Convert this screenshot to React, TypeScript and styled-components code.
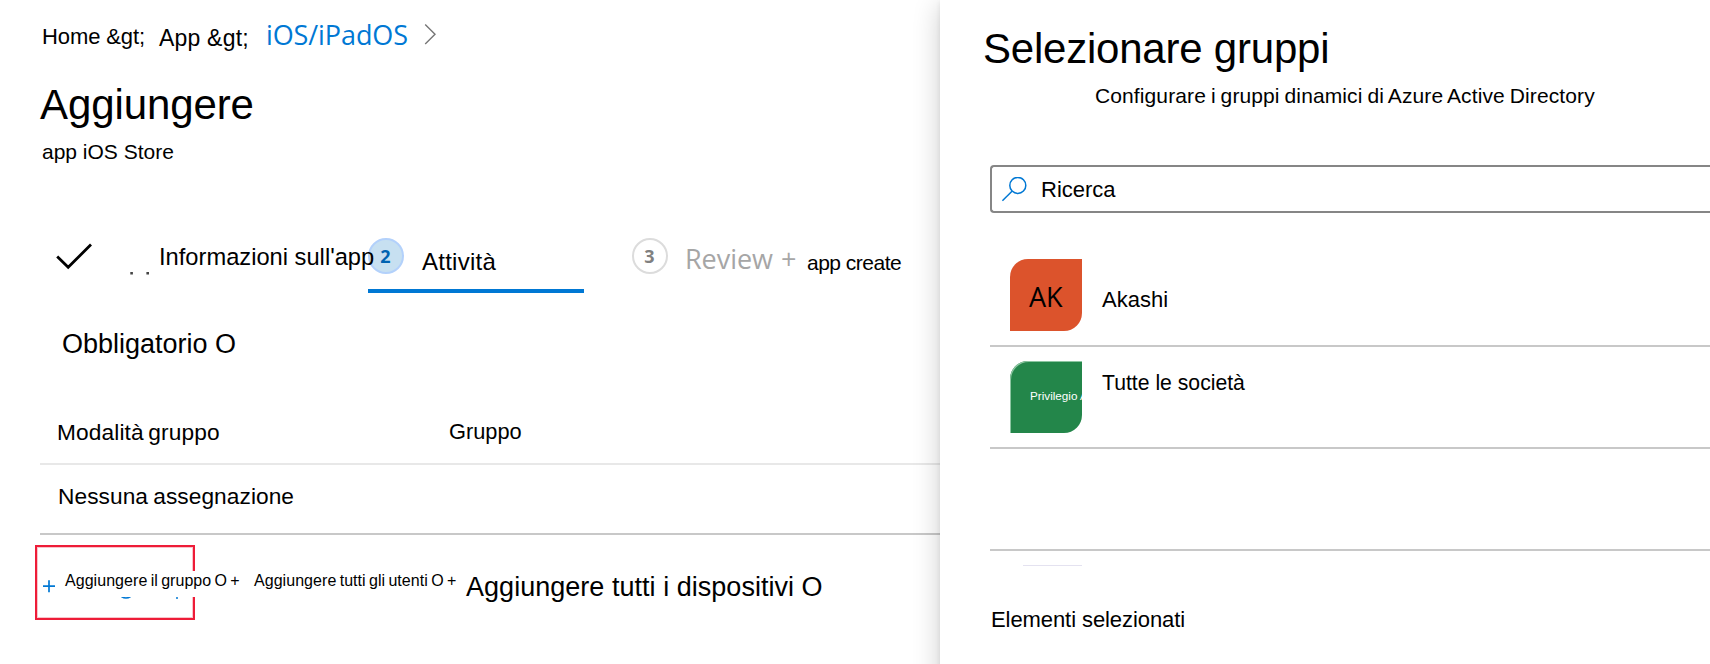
import React from "react";
import styled, { createGlobalStyle } from "styled-components";

const GlobalStyle = createGlobalStyle`
  * { box-sizing: border-box; }
  body { margin: 0; background: #fff; color: #000; overflow: hidden; }
`;

const sans = `"Liberation Sans", Arial, sans-serif`;
const humanist = `"Open Sans", "Segoe UI", sans-serif`;

const Page = styled.div`
  display: flex;
  align-items: flex-start;
  width: 1710px;
  height: 664px;
  overflow: hidden;
  font-family: ${sans};
`;

const Main = styled.main`
  width: 940px;
  height: 664px;
  flex: none;
  overflow: hidden;
`;

const SidePanel = styled.aside`
  position: relative;
  flex: none;
  width: 770px;
  height: 720px;
  background: #fff;
  box-shadow: 0 5px 26px rgba(0, 0, 0, 0.2), 0 2px 5px rgba(0, 0, 0, 0.08);
`;

type TextProps = { $size: number; $drop?: number; $spacing?: number; $words?: number };

const Label = styled.span<TextProps>`
  display: block;
  white-space: nowrap;
  line-height: 1;
  font-size: ${(p) => p.$size}px;
  padding-top: ${(p) => p.$drop ?? 0}px;
  letter-spacing: ${(p) => p.$spacing ?? 0}px;
  word-spacing: ${(p) => p.$words ?? 0}px;
`;

const SoftLabel = styled(Label)<{ $color: string }>`
  font-family: ${humanist};
  color: ${(p) => p.$color};
`;

const Title = styled.h1<{ $spacing: number }>`
  margin: 0;
  font-weight: 400;
  font-size: 42px;
  line-height: 1;
  white-space: nowrap;
  letter-spacing: ${(p) => p.$spacing}px;
`;

const Breadcrumb = styled.nav`
  display: grid;
  grid-template-columns: 117px 107px 158px auto;
  align-items: start;
  height: 84px;
  padding: 21px 0 0 42px;
`;

const Heading = styled.header`
  height: 154px;
  padding-left: 40px;
`;

const Subtitle = styled.p`
  margin: 15px 0 0 2px;
  font-size: 21px;
  line-height: 1;
`;

const Steps = styled.div`
  display: flex;
  height: 92px;
`;

const Step = styled.div<{ $width: number; $inset: number; $active?: boolean }>`
  display: flex;
  align-items: flex-start;
  width: ${(p) => p.$width}px;
  height: 55px;
  flex: none;
  padding-left: ${(p) => p.$inset}px;
  border-bottom: 4px solid ${(p) => (p.$active ? "#0078d4" : "transparent")};
`;

const StepGap = styled.div<{ $width: number }>`
  flex: none;
  width: ${(p) => p.$width}px;
`;

const StepNumber = styled.span<{ $active?: boolean; $space: number }>`
  flex: none;
  display: flex;
  align-items: center;
  justify-content: center;
  width: 36px;
  height: 36px;
  margin-right: ${(p) => p.$space}px;
  padding-right: 1px;
  border-radius: 50%;
  border: ${(p) => (p.$active ? "2px solid #b3d1fb" : "2px solid #dcdcdc")};
  background: ${(p) => (p.$active ? "#c7e0f1" : "#fff")};
  color: ${(p) => (p.$active ? "#0063b1" : "#808080")};
  font: 700 18px/1 ${humanist};
`;

const StepOverlap = styled.div`
  position: relative;
  z-index: 1;
`;

const CheckIcon = styled.svg`
  flex: none;
  width: 103px;
  height: 40px;
`;

const SectionTitle = styled.h2`
  margin: 0;
  height: 91px;
  padding-left: 62px;
  font-weight: 400;
  font-size: 27px;
  line-height: 28px;
`;

const Table = styled.div`
  margin-left: 40px;
`;

const TableRow = styled.div<{ $height: number; $line: string; $top: number; $inset: number }>`
  display: grid;
  grid-template-columns: 392px auto;
  align-items: start;
  height: ${(p) => p.$height}px;
  padding: ${(p) => p.$top}px 0 0 ${(p) => p.$inset}px;
  border-bottom: 2px solid ${(p) => p.$line};
`;

const Actions = styled.div`
  display: flex;
  align-items: flex-start;
  padding: 10px 0 0 35px;
`;

const Highlight = styled.div`
  flex: none;
  display: flex;
  width: 160px;
  height: 75px;
  border: 2px solid #ee1c38;
  box-shadow: inset 0 0 0 1px #f9c3ca;
  padding: 24px 0 0 6px;
`;

const PlusIcon = styled.svg`
  flex: none;
  width: 19px;
  height: 32px;
  overflow: visible;
`;

const ActionText = styled.span`
  flex: none;
  height: 26px;
  padding: 0 5px 0 3px;
  background: #fff;
  font-size: 16px;
  line-height: 19px;
  white-space: nowrap;
  letter-spacing: 0.05px;
  word-spacing: -1.2px;
`;

const ActionSlot = styled.div<{ $width: number; $top: number; $inset: number }>`
  flex: none;
  width: ${(p) => p.$width}px;
  padding: ${(p) => p.$top}px 0 0 ${(p) => p.$inset}px;
`;

const PanelHead = styled.header`
  height: 165px;
  padding: 28px 0 0 43px;
`;

const PanelNote = styled.p`
  margin: 15px 0 0 112px;
  font-size: 21px;
  line-height: 1;
  white-space: nowrap;
  letter-spacing: 0.11px;
  word-spacing: -1px;
`;

const SearchBox = styled.div`
  display: flex;
  align-items: flex-start;
  gap: 11px;
  height: 48px;
  margin-left: 50px;
  padding: 10px 0 0 8px;
  border: 2px solid #868686;
  border-right: 0;
  border-radius: 4px 0 0 4px;
`;

const SearchIcon = styled.svg`
  width: 30px;
  height: 28px;
`;

const GroupList = styled.div`
  margin: 32px 0 0 50px;
`;

const GroupRow = styled.div`
  display: flex;
  align-items: flex-start;
  gap: 20px;
  height: 102px;
  padding: 14px 0 0 20px;
  border-bottom: 2px solid #c8c8c8;
`;

const GroupTile = styled.div<{ $color: string; $edge?: string }>`
  flex: none;
  width: 72px;
  height: 72px;
  overflow: hidden;
  border-radius: 18px 0 18px 0;
  background: ${(p) => p.$color};
  box-shadow: ${(p) => (p.$edge ? `inset 1px 1px 0 ${p.$edge}` : "none")};
  padding-left: 19px;
`;

const TileCaption = styled(Label)`
  color: #fff;
  padding-left: 1px;
`;

const NextTile = styled.div`
  width: 59px;
  height: 1px;
  margin: 14px 0 0 33px;
  background: #e4e2f0;
`;

const PanelFooter = styled.footer`
  padding: 43px 0 0 51px;
`;

export default function App() {
  return (
    <>
      <GlobalStyle />
      <Page>
        <Main>
          <Breadcrumb>
            <Label $size={22} $drop={5} $spacing={-0.1}>Home &amp;gt;</Label>
            <Label $size={23} $drop={6} $spacing={0.2}>App &amp;gt;</Label>
            <SoftLabel $size={27} $spacing={-0.1} $color="#0078d4">iOS/iPadOS</SoftLabel>
            <svg width="14" height="26" viewBox="0 0 14 26" fill="none" stroke="#767676" strokeWidth="1.4">
              <path d="M1.2 3.5 L11 13.3 L1.2 23" />
            </svg>
          </Breadcrumb>
          <Heading>
            <Title $spacing={-0.1}>Aggiungere</Title>
            <Subtitle>app iOS Store</Subtitle>
          </Heading>
          <Steps>
            <Step $width={368} $inset={56}>
              <CheckIcon viewBox="0 0 103 40" fill="none">
                <path d="M1.2 18.5 L12.2 29.3 L35 6.5" stroke="#000" strokeWidth="2.8" />
                <path d="M74.3 35.3 h2.6 M90.4 35.3 h2.6" stroke="#444" strokeWidth="2.6" />
              </CheckIcon>
              <StepOverlap>
                <Label $size={23.7} $drop={8}>Informazioni sull'app</Label>
              </StepOverlap>
            </Step>
            <Step $width={216} $inset={0} $active>
              <StepNumber $active $space={18}>2</StepNumber>
              <Label $size={24} $drop={12} $spacing={0.25}>Attività</Label>
            </Step>
            <StepGap $width={48} />
            <Step $width={308} $inset={0}>
              <StepNumber $space={17}>3</StepNumber>
              <ActionSlot $width={122} $top={7} $inset={0}>
                <SoftLabel $size={27} $spacing={-0.05} $words={1} $color="#a6a6a6">Review +</SoftLabel>
              </ActionSlot>
              <Label $size={21} $drop={14} $spacing={-0.5}>app create</Label>
            </Step>
          </Steps>
          <SectionTitle>Obbligatorio O</SectionTitle>
          <Table>
            <TableRow $height={44} $line="#e8e8e8" $top={0} $inset={17}>
              <Label $size={22.7} $spacing={0.13} $words={-2}>Modalità gruppo</Label>
              <Label $size={21.8}>Gruppo</Label>
            </TableRow>
            <TableRow $height={70} $line="#c8c8c8" $top={20} $inset={18}>
              <Label $size={22.7} $spacing={0.07} $words={-1.2}>Nessuna assegnazione</Label>
            </TableRow>
          </Table>
          <Actions>
            <Highlight>
              <PlusIcon viewBox="0 0 19 32" fill="none" stroke="#0078d4" strokeWidth="1.7">
                <path d="M0 15.2 h12 M6 9.2 v12" />
                <path d="M78.5 25.5 q4.5 3 9 0 M133 27 h2" />
              </PlusIcon>
              <ActionText>Aggiungere il gruppo O +</ActionText>
            </Highlight>
            <ActionSlot $width={271} $top={26} $inset={56}>
              <ActionText>Aggiungere tutti gli utenti O +</ActionText>
            </ActionSlot>
            <ActionSlot $width={370} $top={29} $inset={0}>
              <Label $size={27} $spacing={0.03}>Aggiungere tutti i dispositivi O</Label>
            </ActionSlot>
          </Actions>
        </Main>
        <SidePanel>
          <PanelHead>
            <Title $spacing={-0.22}>Selezionare gruppi</Title>
            <PanelNote>Configurare i gruppi dinamici di Azure Active Directory</PanelNote>
          </PanelHead>
          <SearchBox>
            <SearchIcon viewBox="0 0 30 28" fill="none" stroke="#0078d4" strokeWidth="1.5">
              <circle cx="17.8" cy="8.4" r="8" />
              <path d="M12 14.2 L2.4 23.8" />
            </SearchIcon>
            <Label $size={22} $drop={2}>Ricerca</Label>
          </SearchBox>
          <GroupList>
            <GroupRow>
              <GroupTile $color="#dc532c">
                <SoftLabel $size={27} $drop={24} $color="#000">AK</SoftLabel>
              </GroupTile>
              <Label $size={22} $drop={30}>Akashi</Label>
            </GroupRow>
            <GroupRow>
              <GroupTile $color="#23864a" $edge="#8cc5a1">
                <TileCaption $size={11.7} $drop={29}>Privilegio A</TileCaption>
              </GroupTile>
              <Label $size={21.2} $drop={11}>Tutte le società</Label>
            </GroupRow>
            <GroupRow />
            <NextTile />
          </GroupList>
          <PanelFooter>
            <Label $size={22} $spacing={-0.08}>Elementi selezionati</Label>
          </PanelFooter>
        </SidePanel>
      </Page>
    </>
  );
}
